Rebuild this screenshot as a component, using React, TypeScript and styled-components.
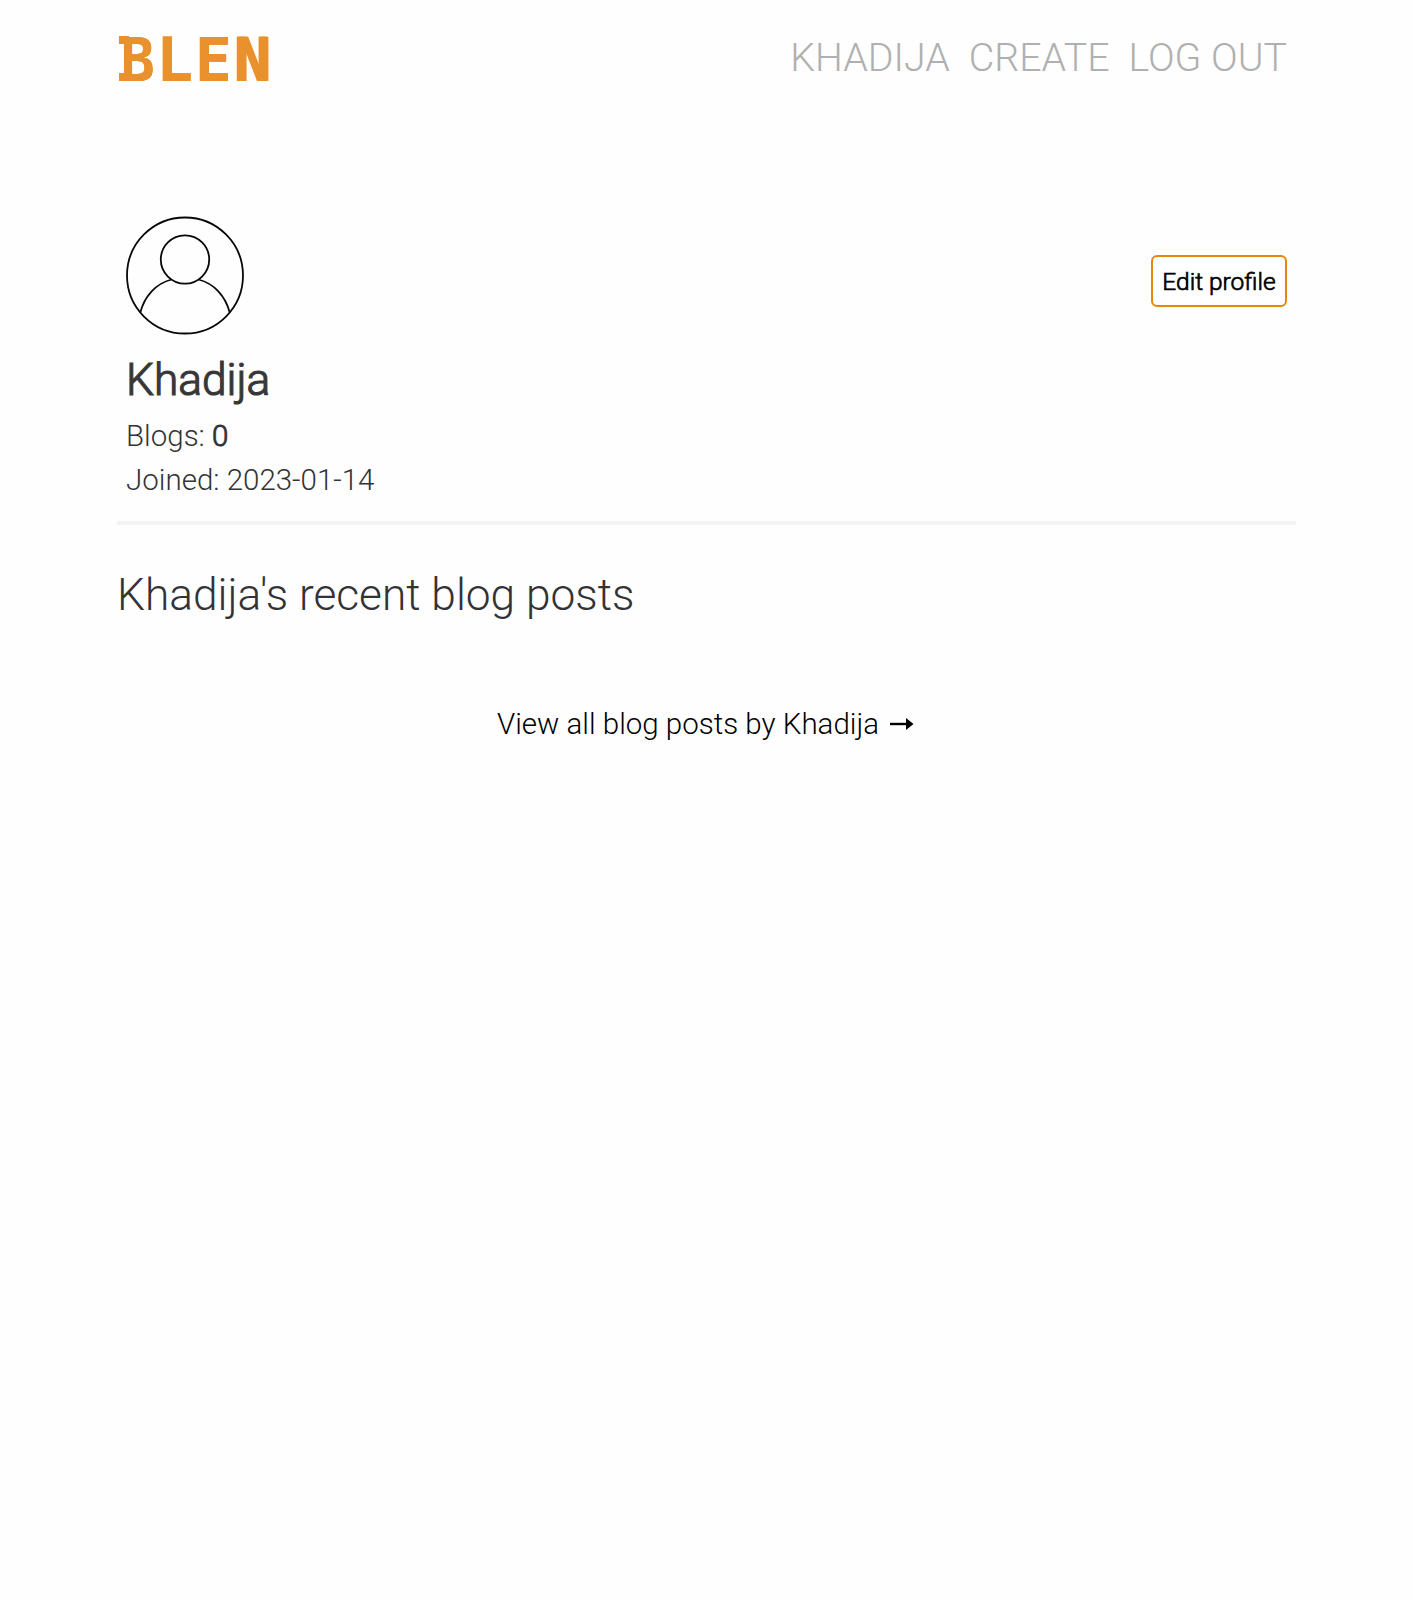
import React from "react";
import styled, { createGlobalStyle } from "styled-components";

const GlobalStyle = createGlobalStyle`
  *, *::before { box-sizing: border-box; }
  body {
    margin: 0;
    background: #fefefe;
    color: #333335;
    font-family: Roboto, "Liberation Sans", sans-serif;
    font-weight: 300;
  }
  h1, h2, p { margin: 0; font-weight: 300; }
`;

const Page = styled.div`
  width: 1179px;
  min-height: 1600px;
  margin: 0 0 0 117px;
`;

const Header = styled.header`
  display: flex;
  justify-content: space-between;
  align-items: flex-start;
  height: 216px;
  padding: 29px 9px 0 0;
`;

const Logo = styled.a`
  display: flex;
  color: #e8912d;
  font: bold 61px/61px "DejaVu Sans Mono", monospace;
`;

const Letter = styled.span<{ $heavy?: boolean }>`
  display: block;
  width: 38.9px;
  text-shadow: ${(p) => (p.$heavy ? "1.5px 0 #e8912d, -0.5px 0 #e8912d" : "0.5px 0 #e8912d")};
`;

const SlabLetter = styled(Letter)`
  position: relative;
  padding-left: 1px;
  &::before {
    content: "";
    position: absolute;
    left: 2px;
    top: 7px;
    width: 10px;
    height: 45px;
    border: solid #e8912d;
    border-width: 8px 0;
  }
`;

const Glyph = styled.span`
  display: block;
  transform: scaleX(0.93);
  transform-origin: 34px 0;
`;

const Nav = styled.nav`
  display: flex;
  gap: 19px;
  padding-top: 5px;
`;

const NavLink = styled.a`
  color: #b0b0b0;
  font-size: 39.3px;
  line-height: 48px;
  white-space: nowrap;
`;

const Profile = styled.section`
  display: flex;
  justify-content: space-between;
  align-items: flex-start;
  height: 309px;
  padding: 0 9px;
  border-bottom: 4px solid #f3f3f3;
`;

const Avatar = styled.svg`
  display: block;
  width: 118px;
  height: 119px;
  fill: none;
  stroke: #080808;
  stroke-width: 1.8;
`;

const Name = styled.h1`
  margin-top: 18px;
  font-size: 44.25px;
  line-height: 54px;
  -webkit-text-stroke: 1.2px #3b3b3d;
`;

const Detail = styled.p<{ $first?: boolean }>`
  font-size: 29.5px;
  line-height: 44px;
  margin-top: ${(p) => (p.$first ? "7px" : "0")};
`;

const Count = styled.b`
  font-weight: 300;
  -webkit-text-stroke: 0.9px #333335;
`;

const EditButton = styled.button`
  margin-top: 39px;
  width: 136px;
  height: 52px;
  padding: 2px 0 0;
  border: 2px solid #e8850c;
  border-radius: 6px;
  background: #fff;
  color: #000;
  font: 300 24.5px/46px Roboto, sans-serif;
  -webkit-text-stroke: 0.7px #000;
`;

const Heading = styled.h2`
  margin-top: 43px;
  font-size: 44.25px;
  line-height: 54px;
  white-space: nowrap;
`;

const ViewAll = styled.a`
  display: flex;
  justify-content: center;
  align-items: center;
  gap: 10px;
  margin-top: 80px;
  padding-right: 2px;
  color: #000;
  font-size: 29.5px;
  line-height: 44px;
`;

const Arrow = styled.svg`
  width: 25px;
  height: 14px;
`;

export default function App() {
  return (
    <>
      <GlobalStyle />
      <Page>
        <Header>
          <Logo>
            <SlabLetter><Glyph>B</Glyph></SlabLetter>
            <Letter>L</Letter>
            <Letter>E</Letter>
            <Letter $heavy>N</Letter>
          </Logo>
          <Nav>
            <NavLink>KHADIJA</NavLink>
            <NavLink>CREATE</NavLink>
            <NavLink>LOG OUT</NavLink>
          </Nav>
        </Header>
        <Profile>
          <div>
            <Avatar viewBox="0 0 118 119">
              <circle cx="59" cy="59.5" r="58" />
              <circle cx="59" cy="43.5" r="24.2" />
              <path d="M14.3 96.5 C18.5 80 30 67.5 45.5 63.5 M72.5 63.5 C88 67.5 99.5 80 103.7 96.5" />
            </Avatar>
            <Name>Khadija</Name>
            <Detail $first>Blogs: <Count>0</Count></Detail>
            <Detail>Joined: 2023-01-14</Detail>
          </div>
          <EditButton>Edit profile</EditButton>
        </Profile>
        <Heading>Khadija's recent blog posts</Heading>
        <ViewAll>
          <span>View all blog posts by Khadija</span>
          <Arrow viewBox="0 0 25 14">
            <path d="M1 7H19" stroke="#000" strokeWidth="2.4" fill="none" />
            <path d="M17 1L24.5 7L17 13Z" />
          </Arrow>
        </ViewAll>
      </Page>
    </>
  );
}
